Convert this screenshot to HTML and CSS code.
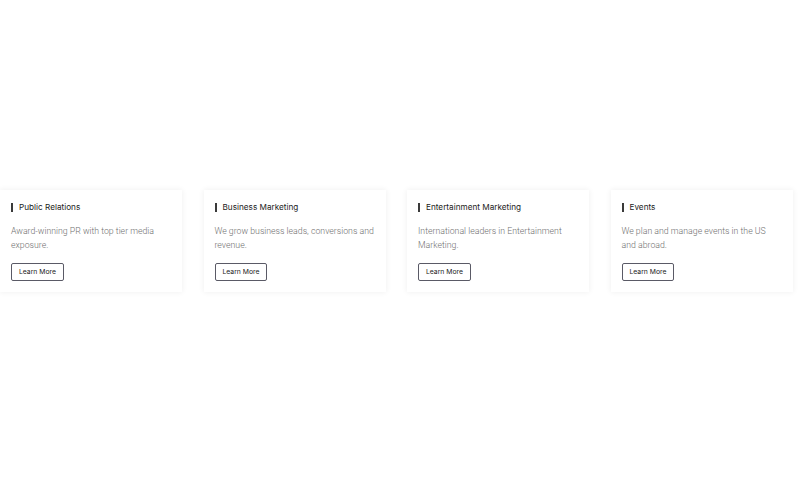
FILE: index.html
```html
<!DOCTYPE html>
<html>
<head>
<meta charset="utf-8">
<link rel="stylesheet" href="styles.css">
</head>
<body>
<section class="services">
  <div class="card">
    <h3 class="card-title">Public Relations</h3>
    <p class="card-text">Award-winning PR with top tier media exposure.</p>
    <a class="btn">Learn More</a>
  </div>
  <div class="card">
    <h3 class="card-title">Business Marketing</h3>
    <p class="card-text">We grow business leads, conversions and revenue.</p>
    <a class="btn">Learn More</a>
  </div>
  <div class="card">
    <h3 class="card-title">Entertainment Marketing</h3>
    <p class="card-text">International leaders in Entertainment Marketing.</p>
    <a class="btn">Learn More</a>
  </div>
  <div class="card">
    <h3 class="card-title">Events</h3>
    <p class="card-text">We plan and manage events in the US and abroad.</p>
    <a class="btn">Learn More</a>
  </div>
</section>
</body>
</html>
```
FILE: styles.css
```css
html, body {
  margin: 0;
  padding: 0;
  background: #ffffff;
  width: 800px;
  height: 480px;
  overflow: hidden;
}
.services {
  display: flex;
  gap: 21.5px;
  padding-top: 190px;
}
.card {
  width: 182px;
  box-sizing: border-box;
  padding: 12px 11px 11px 11px;
  background: #fff;
  box-shadow: 0 0 6px rgba(0, 0, 0, 0.07);
  display: flex;
  flex-direction: column;
  align-items: flex-start;
}
.card-title {
  margin: 0;
  font-family: Inter, "Noto Sans", sans-serif;
  font-weight: 400;
  font-size: 8.2px;
  line-height: 11px;
  color: #1c1c22;
  display: flex;
  align-items: center;
  gap: 6px;
}
.card-title::before {
  content: "";
  width: 2px;
  height: 9px;
  background: #3a3a3a;
}
.card-text {
  margin: 11px 0 11px 0;
  font-family: Roboto, "Liberation Sans", sans-serif;
  font-weight: 300;
  font-size: 8.75px;
  line-height: 14px;
  color: #6f6f6f;
}
.btn {
  display: inline-block;
  box-sizing: border-box;
  height: 18px;
  padding: 0 7px;
  border: 1px solid #5a5a66;
  border-radius: 2px;
  font-family: Inter, "Noto Sans", sans-serif;
  font-size: 6.8px;
  line-height: 16px;
  color: #222;
}
```
